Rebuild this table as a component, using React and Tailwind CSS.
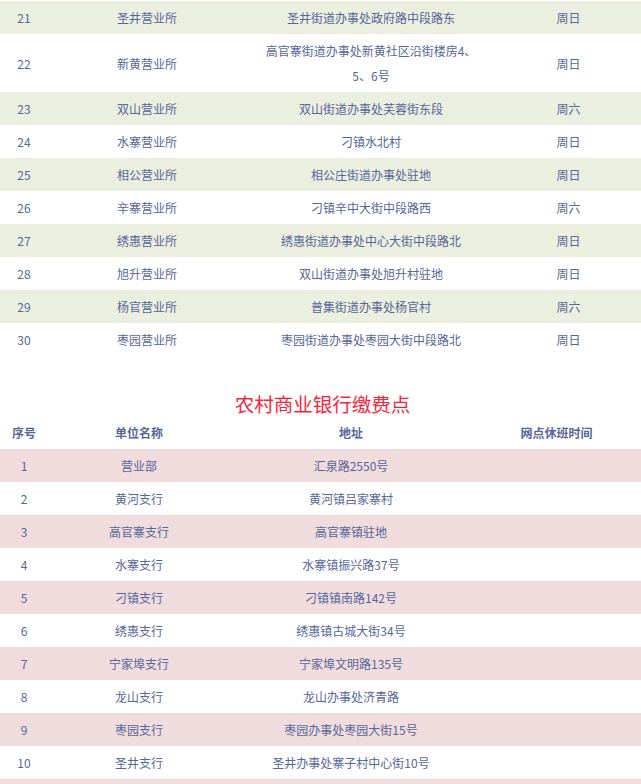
import React from "react";

const branches = [
  ["21", "圣井营业所", "圣井街道办事处政府路中段路东", "周日"],
  ["22", "新黄营业所", "高官寨街道办事处新黄社区沿街楼房4、5、6号", "周日"],
  ["23", "双山营业所", "双山街道办事处芙蓉街东段", "周六"],
  ["24", "水寨营业所", "刁镇水北村", "周日"],
  ["25", "相公营业所", "相公庄街道办事处驻地", "周日"],
  ["26", "辛寨营业所", "刁镇辛中大街中段路西", "周六"],
  ["27", "绣惠营业所", "绣惠街道办事处中心大街中段路北", "周日"],
  ["28", "旭升营业所", "双山街道办事处旭升村驻地", "周日"],
  ["29", "杨官营业所", "普集街道办事处杨官村", "周六"],
  ["30", "枣园营业所", "枣园街道办事处枣园大街中段路北", "周日"],
];

const banks = [
  ["1", "营业部", "汇泉路2550号"],
  ["2", "黄河支行", "黄河镇吕家寨村"],
  ["3", "高官寨支行", "高官寨镇驻地"],
  ["4", "水寨支行", "水寨镇振兴路37号"],
  ["5", "刁镇支行", "刁镇镇南路142号"],
  ["6", "绣惠支行", "绣惠镇古城大街34号"],
  ["7", "宁家埠支行", "宁家埠文明路135号"],
  ["8", "龙山支行", "龙山办事处济青路"],
  ["9", "枣园支行", "枣园办事处枣园大街15号"],
  ["10", "圣井支行", "圣井办事处寨子村中心街10号"],
  ["", "", ""],
];

const App = () => {
  return (
    <div
      className="w-[641px] h-[784px] overflow-hidden bg-white text-[12px] text-[#56669a] pt-[1px]"
      style={{ fontFamily: '"Noto Sans CJK SC", "Noto Sans", sans-serif' }}
    >
      <div>
        {branches.map((b, i) => (
          <div
            key={b[0]}
            className={`grid grid-cols-[48px_198px_250px_145px] items-center text-center leading-[25px] py-[4px] ${
              i % 2 === 0 ? "bg-[#ebefdf]" : "bg-white"
            }`}
          >
            <div>{b[0]}</div>
            <div>{b[1]}</div>
            <div className="px-[18px]">{b[2]}</div>
            <div>{b[3]}</div>
          </div>
        ))}
      </div>

      <div className="mt-[36px] text-center text-[19.5px] leading-[24px] text-[#ff1f3d] pl-[4px]">
        农村商业银行缴费点
      </div>

      <div className="grid grid-cols-[48px_182px_242px_169px] items-center text-center h-[33px] font-bold">
        <div>序号</div>
        <div>单位名称</div>
        <div>地址</div>
        <div>网点休班时间</div>
      </div>
      {banks.map((b, i) => (
        <div
          key={i}
          className={`grid grid-cols-[48px_182px_242px_169px] items-center text-center h-[33px] ${
            i % 2 === 0 ? "bg-[#f0dcdc]" : "bg-white"
          }`}
        >
          <div>{b[0]}</div>
          <div>{b[1]}</div>
          <div>{b[2]}</div>
          <div></div>
        </div>
      ))}
    </div>
  );
};

export default App;
